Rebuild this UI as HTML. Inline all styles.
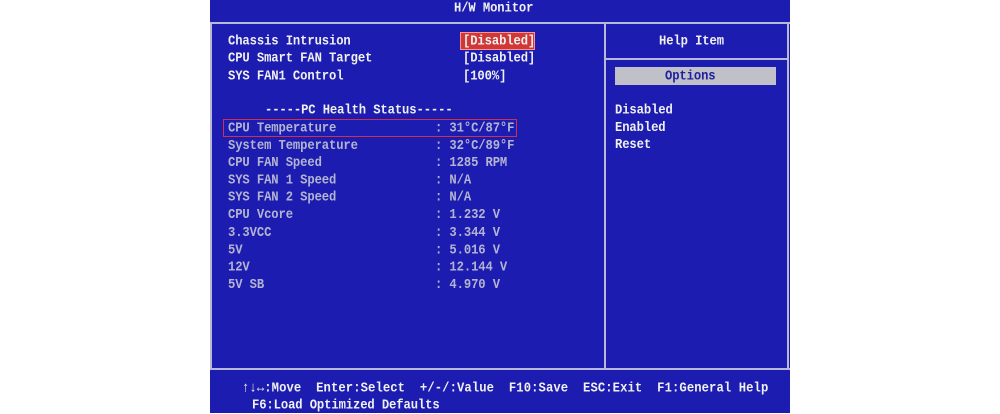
<!DOCTYPE html>
<html><head><meta charset="utf-8"><style>
body{margin:0;width:1000px;height:413px;background:#fff;overflow:hidden;position:relative;font-family:"Liberation Mono",monospace;}
#blue{position:absolute;left:210px;top:0;width:580px;height:413px;background:#1c1cb0;}
.t{position:absolute;font-size:12.2px;font-weight:bold;color:#d8d8e8;white-space:pre;line-height:16px;letter-spacing:-0.1px;transform:scaleY(1.15);transform-origin:0 50%;}
.g{color:#b4b4d2;line-height:15.09px;transform-origin:0 0;}
.m{line-height:15.09px;transform-origin:0 0;}
.w{color:#f0f0f0;}
.ln{position:absolute;background:#b8b8d8;}
</style></head><body>
<div id="blue"></div>
<div class="t w" style="left:454px;top:0px">H/W Monitor</div>
<div class="ln" style="left:210px;top:22px;width:580px;height:2px"></div>
<div class="ln" style="left:210px;top:22px;width:2px;height:348px"></div>
<div class="ln" style="left:787px;top:22px;width:2px;height:348px"></div>
<div class="ln" style="left:210px;top:368px;width:580px;height:2px"></div>
<div class="ln" style="left:604px;top:22px;width:2px;height:348px"></div>
<div class="ln" style="left:604px;top:58px;width:185px;height:2px"></div>

<div class="t w" style="left:228px;top:33px">Chassis Intrusion</div>
<div class="t w" style="left:228px;top:50px">CPU Smart FAN Target</div>
<div class="t w" style="left:228px;top:68px">SYS FAN1 Control</div>
<div style="position:absolute;left:460px;top:32px;width:75px;height:18px;background:#d03838;border:1px solid #ff9090;box-sizing:border-box"></div>
<div class="t w" style="left:463px;top:33px">[Disabled]</div>
<div class="t w" style="left:463px;top:50px">[Disabled]</div>
<div class="t w" style="left:463px;top:68px">[100%]</div>

<div class="t w" style="left:265px;top:102px">-----PC Health Status-----</div>
<div style="position:absolute;left:223px;top:119px;width:294px;height:18px;border:1px solid #d03050;box-sizing:border-box"></div>
<div class="t g" style="left:228px;top:120px">CPU Temperature
System Temperature
CPU FAN Speed
SYS FAN 1 Speed
SYS FAN 2 Speed
CPU Vcore
3.3VCC
5V
12V
5V SB</div>
<div class="t g" style="left:435px;top:120px">: 31°C/87°F
: 32°C/89°F
: 1285 RPM
: N/A
: N/A
: 1.232 V
: 3.344 V
: 5.016 V
: 12.144 V
: 4.970 V</div>

<div class="t w" style="left:659px;top:33px">Help Item</div>
<div style="position:absolute;left:615px;top:67px;width:161px;height:18px;background:#c0c0c8"></div>
<div class="t" style="left:665px;top:68px;color:#2020a0">Options</div>
<div class="t w m" style="left:615px;top:102px">Disabled
Enabled
Reset</div>

<div class="t w" style="left:242px;top:380px;letter-spacing:0.1px">↑↓↔:Move  Enter:Select  +/-/:Value  F10:Save  ESC:Exit  F1:General Help</div>
<div class="t w" style="left:252px;top:397px">F6:Load Optimized Defaults</div>
</body></html>
